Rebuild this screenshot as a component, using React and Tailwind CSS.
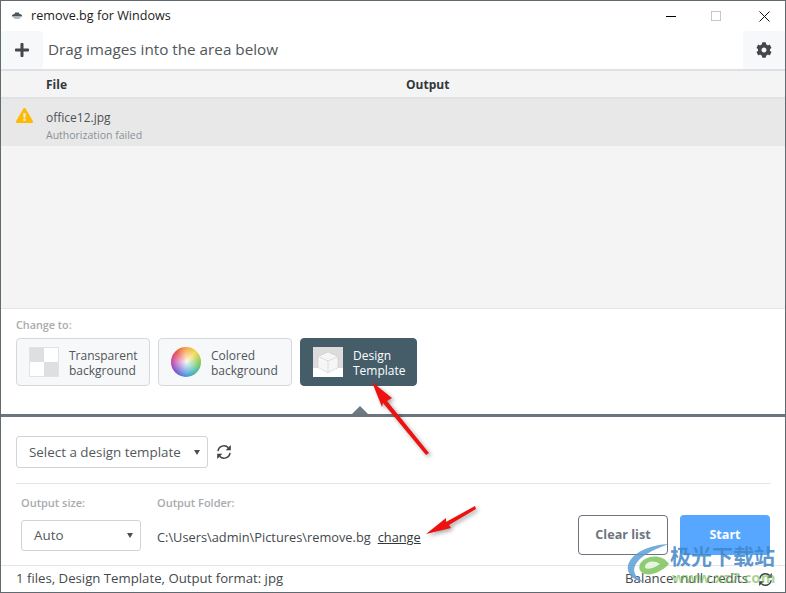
import { FaPlus, FaCog, FaExclamationTriangle } from "react-icons/fa";

const font = { fontFamily: '"Open Sans", "Noto Sans CJK SC", sans-serif' };

const Wheel = () => (
  <div
    className="w-[30px] h-[30px] rounded-full"
    style={{
      background:
        "radial-gradient(circle, rgba(255,255,255,0.9) 0%, rgba(255,255,255,0) 72%), conic-gradient(#f6a13a, #f4d33c, #7cc84a, #3cb6a0, #3c8fe0, #6a4fc8, #c23ca8, #e8443c, #f6a13a)",
    }}
  />
);

const Checker = () => (
  <div className="w-[30px] h-[30px] grid grid-cols-2 grid-rows-2 border border-[#e3e3e3]">
    <div className="bg-[#dedfe0]" />
    <div className="bg-white" />
    <div className="bg-white" />
    <div className="bg-[#dedfe0]" />
  </div>
);

const Cube = () => (
  <div className="w-[30px] h-[30px] bg-[#dcdcdc] relative overflow-hidden">
    <div className="absolute left-0 right-0 bottom-0 h-[9px] bg-white" />
    <svg viewBox="0 0 30 30" className="absolute inset-0 w-full h-full">
      <path d="M5 9.5 15 5l10 4.5v11L15 26 5 20.5z" fill="#f6f6f6" stroke="#c4c4c4" strokeWidth="0.8" strokeDasharray="1.2 0.8" />
      <path d="M5 9.5 15 14l10-4.5M15 14v12" fill="none" stroke="#c4c4c4" strokeWidth="0.8" strokeDasharray="1.2 0.8" />
    </svg>
  </div>
);

const Sync = ({ className }) => (
  <svg viewBox="0 0 16 16" className={className}>
    <path d="M2 7.2A6 6 0 0 1 12.4 3.8M14 8.8A6 6 0 0 1 3.6 12.2" fill="none" stroke="#3e4246" strokeWidth="1.5" />
    <path d="M14.8 1v5.2H9.6zM1.2 15V9.8h5.2z" fill="#3e4246" />
  </svg>
);

const Choice = ({ icon, top, bottom, active, w }) => (
  <div
    className={`h-[48px] rounded-[4px] border flex items-center pl-3 gap-[10px] ${w} ${
      active ? "bg-[#445d69] border-[#445d69] text-white" : "bg-[#f7f8f9] border-[#d5d8db] text-[#4f5559]"
    }`}
  >
    {icon}
    <div className="text-[12px] leading-[15px] pt-[2px]">
      <div>{top}</div>
      <div>{bottom}</div>
    </div>
  </div>
);

const Caret = () => (
  <div className="w-0 h-0 border-l-[3px] border-r-[3px] border-t-[5px] border-l-transparent border-r-transparent border-t-[#4a4f53]" />
);

export default function App() {
  return (
    <div style={font} className="relative w-[786px] h-[593px] bg-white border border-[#5f6b70] overflow-hidden flex flex-col">
      {/* title bar */}
      <div className="h-[30px] shrink-0 flex items-center pl-[10px]">
        <svg viewBox="0 0 12 8" className="w-[12px] h-[8px]">
          <path d="M1 3 4 1.5V.5h4v1L11 3v1.5H1z" fill="#4e5559" />
          <path d="M1 4.5h10L8 7H4z" fill="#b4b9bc" />
        </svg>
        <span className="ml-[8px] text-[12.6px] text-[#1c1c1c]">remove.bg for Windows</span>
        <div className="ml-auto flex items-center">
          <div className="w-[10px] h-px bg-black mr-[35px]" />
          <div className="w-[10px] h-[10px] border border-[#c8c8c8] mr-[38px]" />
          <svg viewBox="0 0 11 11" className="w-[11px] h-[11px] mr-[15px]">
            <path d="M.5.5l10 10M10.5.5l-10 10" stroke="#111" strokeWidth="1" fill="none" />
          </svg>
        </div>
      </div>

      {/* toolbar */}
      <div className="h-[38px] shrink-0 flex items-center">
        <div className="w-[42px] h-full bg-[#f7f8f9] rounded-[3px] flex items-center justify-center">
          <FaPlus className="text-[#43464a] text-[16px]" />
        </div>
        <span className="ml-[5px] text-[15.25px] leading-[20px] mb-[2px] text-[#51575b]">Drag images into the area below</span>
        <div className="ml-auto w-[42px] h-full bg-[#f7f8f9] rounded-[3px] flex items-center justify-center">
          <FaCog className="text-[#43464a] text-[16px]" />
        </div>
      </div>

      {/* file list */}
      <div className="flex-1 bg-[#f4f4f5] border-t-2 border-[#dfe0e5] border-b border-b-[#e4e5e7] flex flex-col">
        <div className="h-[28px] shrink-0 flex items-center pt-[2px] text-[12px] font-bold text-[#33373a] border-b-2 border-[#dee2e6]">
          <span className="ml-[45px] w-[360px]">File</span>
          <span>Output</span>
        </div>
        <div className="h-[47px] shrink-0 bg-[#e8e8e9] flex">
          <FaExclamationTriangle className="ml-[15px] mt-[8px] text-[#ffb900] text-[17px]" />
          <div className="ml-[13px] pt-[9px]">
            <div className="text-[12px] leading-[19px] text-[#4d5256]">office12.jpg</div>
            <div className="text-[10.5px] leading-[16px] text-[#8a9095]">Authorization failed</div>
          </div>
        </div>
      </div>

      {/* change to */}
      <div className="h-[105px] shrink-0 pl-[15px] pt-[9px] relative">
        <div className="text-[10.8px] leading-[14px] font-semibold text-[#a7abae]">Change to:</div>
        <div className="flex gap-2 mt-[6px]">
          <Choice w="w-[134px]" icon={<Checker />} top="Transparent" bottom="background" />
          <Choice w="w-[134px]" icon={<Wheel />} top="Colored" bottom="background" />
          <Choice w="w-[117px]" active icon={<Cube />} top="Design" bottom="Template" />
        </div>
        <div className="absolute left-[351px] bottom-0 w-0 h-0 border-l-[8px] border-r-[8px] border-b-[8px] border-l-transparent border-r-transparent border-b-[#6c7a82]" />
      </div>
      <div className="h-[3px] shrink-0 bg-[#6c757d]" />

      {/* template + output */}
      <div className="h-[148px] shrink-0 px-[15px] flex flex-col">
        <div className="flex items-center mt-[19px] h-[32px] shrink-0">
          <div className="w-[192px] h-[32px] border border-[#ced4da] rounded-[3px] flex items-center pl-3 pr-[7px] text-[13.4px] text-[#53595d]">
            <span>Select a design template</span>
            <div className="ml-auto"><Caret /></div>
          </div>
          <Sync className="ml-[8px] w-[16px] h-[16px]" />
        </div>
        <div className="h-px bg-[#e4e5e6] mt-[15px] w-[755px] shrink-0" />
        <div className="flex mt-[12px]">
          <div className="ml-[5px] w-[136px]">
            <div className="text-[11px] leading-[14px] font-semibold text-[#a7abae]">Output size:</div>
            <div className="w-[120px] h-[31px] mt-[10px] border border-[#ced4da] rounded-[3px] flex items-center pl-3 pr-[7px] text-[13.4px] text-[#53595d]">
              <span>Auto</span>
              <div className="ml-auto"><Caret /></div>
            </div>
          </div>
          <div>
            <div className="text-[11px] leading-[14px] font-semibold text-[#a7abae]">Output Folder:</div>
            <div className="h-[31px] mt-[12px] flex items-center text-[12.8px] text-[#45494d]">
              <span>C:\Users\admin\Pictures\remove.bg</span>
              <span className="ml-[7px] underline text-[#33373a]">change</span>
            </div>
          </div>
          <div className="ml-auto flex gap-3 mt-[19px]">
            <div className="w-[90px] h-[40px] border border-[#6c757d] rounded-[4px] flex items-center justify-center text-[12.6px] font-bold text-[#6c757d]">
              Clear list
            </div>
            <div className="w-[90px] h-[40px] bg-[#57a6ff] rounded-[4px] flex items-center justify-center text-[12.6px] font-bold text-white">
              Start
            </div>
          </div>
        </div>
      </div>

      {/* status bar */}
      <div className="h-[27px] shrink-0 border-t border-[#e4e5e6] pl-[15px] pr-[12px] flex items-center text-[13.2px] text-[#45494d]">
        <span>1 files, Design Template, Output format: jpg</span>
        <span className="ml-auto">Balance: null credits</span>
        <Sync className="ml-[10px] w-[15px] h-[15px]" />
      </div>

      {/* annotation arrows */}
      <svg viewBox="0 0 786 593" className="absolute left-[-1px] top-[-1px] w-[786px] h-[593px] pointer-events-none drop-shadow-[2px_2px_2px_rgba(0,0,0,0.35)]">
        <path d="M372 382 392 398 387 401 429 453 426 455 383 403 382 407z" fill="#ee1111" />
        <path d="M426 534 446 518 446 522 475 506 476 509 449 525 451 528z" fill="#ee1111" />
      </svg>

      {/* watermark */}
      <svg viewBox="0 0 44 40" className="absolute left-[626px] top-[542px] w-[44px] h-[40px] pointer-events-none">
        <path d="M42 1C24 2 6 8 1 22-1 32 8 38 17 39 10 35 5 30 8 23 12 13 28 6 42 1z" fill="#5c9fd6" fillOpacity="0.85" />
        <path d="M42 21C35 10 18 12 13 21 10 28 17 33 25 31 33 29 38 25 42 21z" fill="#7cc35a" fillOpacity="0.85" />
        <path d="M33 21C27 17 20 18 18 23 17 27 24 27 33 21z" fill="#ffffff" fillOpacity="0.8" />
      </svg>
      <div className="absolute left-[669px] top-[540px] text-[21px] leading-[28px] font-bold text-[#3f86c6]/85 pointer-events-none" style={{ fontFamily: '"Noto Sans CJK SC", sans-serif' }}>
        极光下载站
      </div>
      <div className="absolute left-[671px] top-[566px] text-[15px] leading-[20px] font-bold text-[#6fb84f]/60 pointer-events-none">
        www.xz7.com
      </div>
    </div>
  );
}
